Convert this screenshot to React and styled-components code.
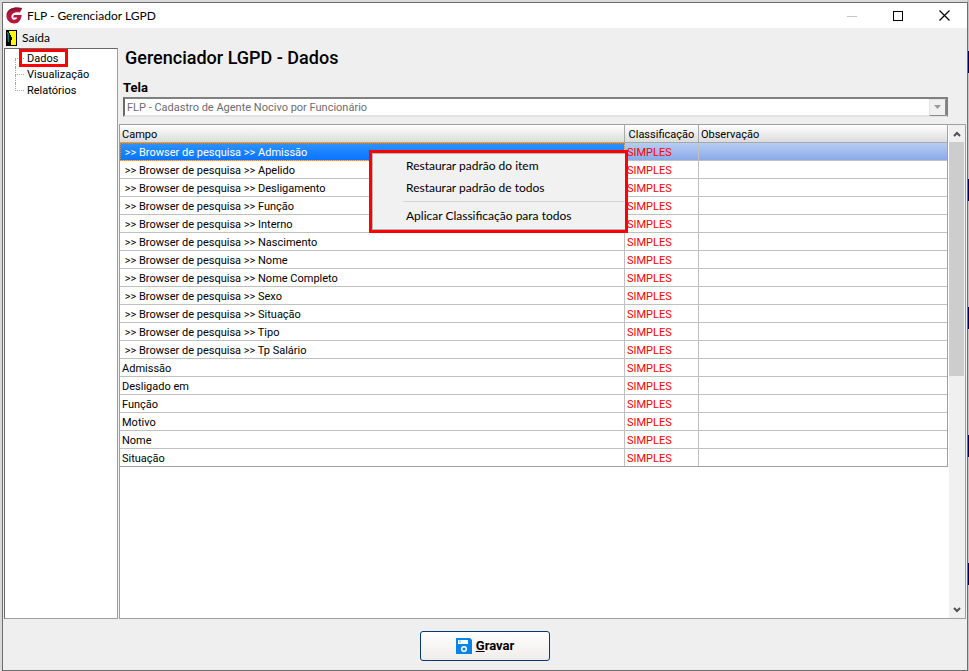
import React, { useState } from 'react';
import styled, { createGlobalStyle, css } from 'styled-components';

const menuFont = 'Lato, "Open Sans", sans-serif';

const GlobalStyle = createGlobalStyle`
	*, *::before, *::after {
		box-sizing: border-box;
	}

	body {
		margin: 0;
		font-family: Roboto, "Liberation Sans", sans-serif;
		font-size: 11px;
		line-height: 16px;
		color: #000;
	}

	button, select, input {
		font: inherit;
		color: inherit;
	}
`;

const Desktop = styled.div`
	height: 100vh;
	padding: 2px 1px 0 2px;
	background:
		repeating-linear-gradient(to bottom, #c4c4c4 0, #c4c4c4 51px, #00006b 51px, #00006b 73px, #c4c4c4 73px, #c4c4c4 128px) right top / 2px 100% no-repeat,
		#d9d9d9;
`;

const Window = styled.div`
	height: 100%;
	display: flex;
	flex-direction: column;
	border: 1px solid #6e6e6e;
	background: #efefef;
`;

const TitleBar = styled.header`
	flex: none;
	height: 25px;
	display: flex;
	align-items: center;
	gap: 4px;
	padding-left: 3px;
	background: #fff;
`;

const WindowTitle = styled.h1`
	flex: 1;
	margin: 0;
	font: 400 12px/16px ${menuFont};
`;

const CaptionButtons = styled.div`
	display: flex;
`;

const CaptionButton = styled.button`
	width: 46px;
	height: 25px;
	display: flex;
	align-items: center;
	justify-content: center;
	padding: 0;
	border: 0;
	background: none;
`;

const MenuBar = styled.nav`
	flex: none;
	height: 20px;
	display: flex;
	align-items: center;
	padding-left: 3px;
`;

const MenuButton = styled.button`
	display: flex;
	align-items: center;
	gap: 5px;
	padding: 0;
	border: 0;
	background: none;
	font: 400 12px/16px ${menuFont};
`;

const Body = styled.div`
	flex: 1;
	min-height: 0;
	display: flex;
	gap: 1px;
	padding: 0 1px;
`;

const Tree = styled.ul`
	flex: none;
	width: 114px;
	margin: 0;
	padding: 2px 0 0 10px;
	list-style: none;
	border: 1px solid #9f9f9f;
	border-top-color: #696969;
	border-left-color: #696969;
	background: #fff;
`;

const TreeItem = styled.li`
	position: relative;
	height: 16px;
	display: flex;
	align-items: center;
	padding-left: 10px;

	&::before {
		content: '';
		position: absolute;
		left: 0;
		top: 0;
		width: 9px;
		height: 8px;
		border-left: 1px dotted #a8a8a8;
		border-bottom: 1px dotted #a8a8a8;
	}

	&:first-child::before {
		border-left: 0;
	}

	&:not(:last-child)::after {
		content: '';
		position: absolute;
		left: 0;
		top: 8px;
		height: 8px;
		border-left: 1px dotted #a8a8a8;
	}
`;

const TreeLink = styled.a`
	padding: 0 2px;
	color: #000;
	text-decoration: none;

	${props => props.$marked && css`
		position: relative;

		&::after {
			content: '';
			position: absolute;
			inset: -2px -8px 0 -6px;
			border: 3px solid #f00;
		}
	`}
`;

const Main = styled.main`
	flex: 1;
	min-width: 0;
	display: flex;
	flex-direction: column;
`;

const PageTitle = styled.h2`
	margin: 0;
	padding: 0 6px;
	font-size: 18px;
	font-weight: 500;
	line-height: 20px;
`;

const Field = styled.div`
	display: flex;
	flex-direction: column;
	padding: 12px 18px 7px 4px;
`;

const FieldLabel = styled.label`
	font-size: 13px;
	font-weight: 700;
	line-height: 16px;
`;

const SelectBox = styled.div`
	height: 20px;
	display: flex;
	align-items: center;
	margin-top: 1px;
	border: 2px solid #696969;
	border-top-color: #808080;
	border-right-color: #808080;
	border-bottom-color: #e3e3e3;
	background: #fff;
`;

const Select = styled.select`
	flex: 1;
	min-width: 0;
	height: 16px;
	padding: 1px 2px 0;
	appearance: none;
	border: 0;
	background: none;
	color: #6d6d6d;
	opacity: 1;
`;

const SelectArrow = styled.span`
	width: 17px;
	height: 17px;
	display: flex;
	align-items: center;
	justify-content: center;
	border: 1px solid #8a8a8a;
	border-top-color: #e3e3e3;
	border-left-color: #e3e3e3;
	background: #f0f0f0;
`;

const GridPane = styled.div`
	flex: 1;
	min-height: 0;
	display: flex;
	gap: 1px;
	border: 1px solid #a0a0a0;
	background: #fff;
`;

const GridArea = styled.div`
	position: relative;
	flex: 1;
	min-width: 0;
`;

const Table = styled.table`
	width: 100%;
	table-layout: fixed;
	border-collapse: separate;
	border-spacing: 0;
	border-right: 1px solid #a0a0a0;
	border-bottom: 1px solid #a0a0a0;
`;

const HeadCell = styled.th`
	width: ${props => props.$width || 'auto'};
	height: 18px;
	padding: 2px 2px 0;
	overflow: hidden;
	border-right: 1px solid #a8a8a8;
	border-bottom: 1px solid #a8a8a8;
	background: linear-gradient(#fff, #dcdcdc);
	font-weight: 400;
	line-height: 15px;
	text-align: ${props => props.$align || 'left'};
	white-space: nowrap;

	&:last-child {
		border-right: 0;
	}
`;

const Cell = styled.td`
	height: 18px;
	padding: 2px 2px 0;
	overflow: hidden;
	border-right: 1px solid #c0c0c0;
	border-bottom: 1px solid #c0c0c0;
	line-height: 15px;
	white-space: pre;
	color: ${props => props.$level ? '#f00' : 'inherit'};

	&:last-child {
		border-right: 0;
	}
`;

const Row = styled.tr`
	&:last-child ${Cell} {
		border-bottom: 0;
		height: 17px;
	}

	${props => props.$selected && css`
		${Cell} {
			background: linear-gradient(#b6cdf3, #8caae8);
		}

		${Cell}:first-child {
			background: linear-gradient(#2e93ff, #0a74ff);
			color: #fff;
			outline: 1px dotted #d98a2b;
			outline-offset: -1px;
		}
	`}
`;

const ContextMenu = styled.div`
	position: absolute;
	top: 25px;
	left: 249px;
	width: 259px;
	height: 83px;
	display: flex;
	flex-direction: column;
	padding: 2px 1px 1px 31px;
	border: 3px solid #f00;
	background: #f1f1f1;
	box-shadow: inset 1px 1px 0 #b4b4b4, inset 0 -1px 0 #b4b4b4;
`;

const MenuItem = styled.button`
	height: 22px;
	padding: 0 3px;
	border: 0;
	background: none;
	font: 400 12px/16px ${menuFont};
	text-align: left;
	white-space: nowrap;
`;

const MenuDivider = styled.hr`
	flex: none;
	width: 100%;
	height: 1px;
	margin: 2px 0 3px;
	border: 0;
	background: #d5d5d5;
`;

const ScrollBar = styled.div`
	flex: none;
	width: 16px;
	display: flex;
	flex-direction: column;
	background: #f0f0f0;
`;

const ScrollButton = styled.button`
	flex: none;
	height: 17px;
	display: flex;
	align-items: center;
	justify-content: center;
	padding: 0;
	border: 0;
	background: none;
`;

const ScrollTrack = styled.div`
	flex: 1;
	padding-right: 1px;
`;

const ScrollThumb = styled.div`
	height: 51%;
	background: #cdcdcd;
`;

const Footer = styled.footer`
	flex: none;
	display: flex;
	justify-content: center;
	padding: 12px 0 9px;
`;

const SaveButton = styled.button`
	width: 130px;
	height: 30px;
	display: flex;
	align-items: center;
	justify-content: center;
	gap: 4px;
	border: 1px solid #003c74;
	border-radius: 3px;
	background: linear-gradient(#fff, #f0ecea);
	font-size: 13px;
	font-weight: 700;
`;

const screens = ['Dados', 'Visualização', 'Relatórios'];

const browserFields = [
	'Admissão', 'Apelido', 'Desligamento', 'Função', 'Interno', 'Nascimento',
	'Nome', 'Nome Completo', 'Sexo', 'Situação', 'Tipo', 'Tp Salário'
];

const formFields = ['Admissão', 'Desligado em', 'Função', 'Motivo', 'Nome', 'Situação'];

const rows = [
	...browserFields.map(name => ` >> Browser de pesquisa >> ${name}`),
	...formFields
];

const Logo = () => (
	<svg width="17" height="17" viewBox="0 0 17 17" aria-hidden="true">
		<path d="M16 1C9 -.5 1 1 .5 8.5C.2 13 4 16.6 8.5 16.5C12.5 16.4 15 13.5 15.7 8H8L7 10.5H11.3C10.5 12.5 8.5 13.2 7 12.5C5 11.5 5 8.5 6.5 7C8 5.3 11 5 14 5.5Z" fill="#b5173f" />
		<path d="M16 1C9 -.5 1 1 .5 8.5C3 4 8 2.8 15 3.4Z" fill="#8c1434" />
	</svg>
);

const ExitIcon = () => (
	<svg width="11" height="16" viewBox="0 0 11 16" shapeRendering="crispEdges" aria-hidden="true">
		<path d="M0 0H11V16H0Z" fill="#000" />
		<path d="M3 1H10V15H5V5H4V3H3Z" fill="#ff0" />
		<path d="M1 2H2V3H3V12H2V11H1Z" fill="#008080" />
		<path d="M1 4H2V11H1Z" fill="#800000" />
		<path d="M5 7H6V10H5Z" fill="#000" />
	</svg>
);

const DiskIcon = () => (
	<svg width="16" height="16" viewBox="0 0 16 16" aria-hidden="true">
		<path d="M0 0H14L16 2V16H0Z" fill="#0a84e4" />
		<path d="M2 2H12V6H2Z" fill="#fff" />
		<path d="M3 2H5V5H3Z" fill="#b9d9f5" />
		<circle cx="8" cy="11" r="2.3" fill="none" stroke="#fff" strokeWidth="1.5" />
	</svg>
);

const Chevron = ({ down }) => (
	<svg width="8" height="6" viewBox="0 0 8 6" aria-hidden="true">
		<path d={down ? 'M1 1L4 4L7 1' : 'M1 5L4 2L7 5'} fill="none" stroke="#505050" strokeWidth="2" />
	</svg>
);

const App = () => {
	const [selected, setSelected] = useState(0);

	return (
		<Desktop>
			<GlobalStyle />
			<Window>
				<TitleBar>
					<Logo />
					<WindowTitle>FLP - Gerenciador LGPD</WindowTitle>
					<CaptionButtons>
						<CaptionButton aria-label="Minimizar">
							<svg width="10" height="10" shapeRendering="crispEdges"><path d="M0 5.5H10" stroke="#c4c4c4" /></svg>
						</CaptionButton>
						<CaptionButton aria-label="Maximizar">
							<svg width="10" height="10" shapeRendering="crispEdges"><path d="M.5 .5H9.5V9.5H.5Z" fill="none" stroke="#000" /></svg>
						</CaptionButton>
						<CaptionButton aria-label="Fechar">
							<svg width="11" height="11"><path d="M.5 .5L10.5 10.5M10.5 .5L.5 10.5" stroke="#000" strokeWidth="1.2" /></svg>
						</CaptionButton>
					</CaptionButtons>
				</TitleBar>

				<MenuBar>
					<MenuButton><ExitIcon />Saída</MenuButton>
				</MenuBar>

				<Body>
					<Tree>
						{ screens.map((name, i) => (
							<TreeItem key={name}>
								<TreeLink href="#" $marked={i === 0}>{ name }</TreeLink>
							</TreeItem>
						)) }
					</Tree>

					<Main>
						<PageTitle>Gerenciador LGPD - Dados</PageTitle>
						<Field>
							<FieldLabel htmlFor="tela">Tela</FieldLabel>
							<SelectBox>
								<Select id="tela" disabled>
									<option>FLP - Cadastro de Agente Nocivo por Funcionário</option>
								</Select>
								<SelectArrow>
									<svg width="7" height="4"><path d="M0 0H7L3.5 4Z" fill="#9a9a9a" /></svg>
								</SelectArrow>
							</SelectBox>
						</Field>

						<GridPane>
							<GridArea>
								<Table>
									<thead>
										<tr>
											<HeadCell>Campo</HeadCell>
											<HeadCell $width="74px" $align="center">Classificação</HeadCell>
											<HeadCell $width="30%">Observação</HeadCell>
										</tr>
									</thead>
									<tbody>
										{ rows.map((name, i) => (
											<Row key={i} $selected={i === selected} onClick={() => setSelected(i)}>
												<Cell>{ name }</Cell>
												<Cell $level>SIMPLES</Cell>
												<Cell />
											</Row>
										)) }
									</tbody>
								</Table>

								<ContextMenu>
									<MenuItem>Restaurar padrão do item</MenuItem>
									<MenuItem>Restaurar padrão de todos</MenuItem>
									<MenuDivider />
									<MenuItem>Aplicar Classificação para todos</MenuItem>
								</ContextMenu>
							</GridArea>

							<ScrollBar>
								<ScrollButton aria-label="Rolar para cima"><Chevron /></ScrollButton>
								<ScrollTrack><ScrollThumb /></ScrollTrack>
								<ScrollButton aria-label="Rolar para baixo"><Chevron down /></ScrollButton>
							</ScrollBar>
						</GridPane>
					</Main>
				</Body>

				<Footer>
					<SaveButton><DiskIcon /><span><u>G</u>ravar</span></SaveButton>
				</Footer>
			</Window>
		</Desktop>
	);
};

export default App;
